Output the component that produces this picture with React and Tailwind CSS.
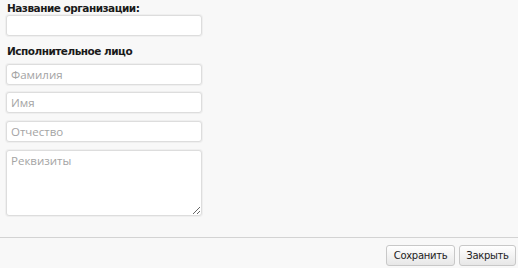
import React from "react";

const boxCls =
  "block w-[196px] bg-white border border-[#dddddd] rounded-[3px] shadow-[0_0_0_1px_#efefef] text-[11.5px] text-[#333] placeholder:text-[#a4a4a4] outline-none";

const labelCls = "text-[10.5px] leading-[13px] font-bold text-[#1a1a1a] tracking-[-0.5px] pl-[1px]";

const btnCls =
  "h-[21px] rounded-[3px] border border-[#c8c8c8] bg-gradient-to-b from-white to-[#e7e7e7] text-[10px] tracking-[-0.3px] text-[#222] leading-none";

export default function App() {
  return (
    <div className="w-[518px] h-[268px] bg-[#f8f8f8] flex flex-col overflow-hidden" style={{ fontFamily: '"DejaVu Sans", Verdana, sans-serif' }}>
      <div className="h-[237px] px-[6px] pt-[2px]">
        <div className={labelCls}>Название организации:</div>
        <input className={boxCls + " h-[21px] px-[4px]"} />

        <div className={labelCls + " mt-[9px]"}>Исполнительное лицо</div>
        <input className={boxCls + " h-[21px] px-[4px] mt-[6px]"} placeholder="Фамилия" style={{ fontFamily: '"Open Sans", sans-serif' }} />
        <input className={boxCls + " h-[21px] px-[4px] mt-[7px]"} placeholder="Имя" style={{ fontFamily: '"Open Sans", sans-serif' }} />
        <input className={boxCls + " h-[21px] px-[4px] mt-[8px]"} placeholder="Отчество" style={{ fontFamily: '"Open Sans", sans-serif' }} />
        <textarea
          className={boxCls + " mt-[8px] h-[66px] px-[4px] py-[1px] resize"}
          placeholder="Реквизиты"
          style={{ fontFamily: '"Open Sans", sans-serif' }}
        />
      </div>

      <div className="flex-1 border-t border-[#d3d3d3] flex justify-end items-start gap-[4px] pt-[7px] pr-[2px]">
        <button className={btnCls + " w-[69px]"}>Сохранить</button>
        <button className={btnCls + " w-[57px]"}>Закрыть</button>
      </div>
    </div>
  );
}
